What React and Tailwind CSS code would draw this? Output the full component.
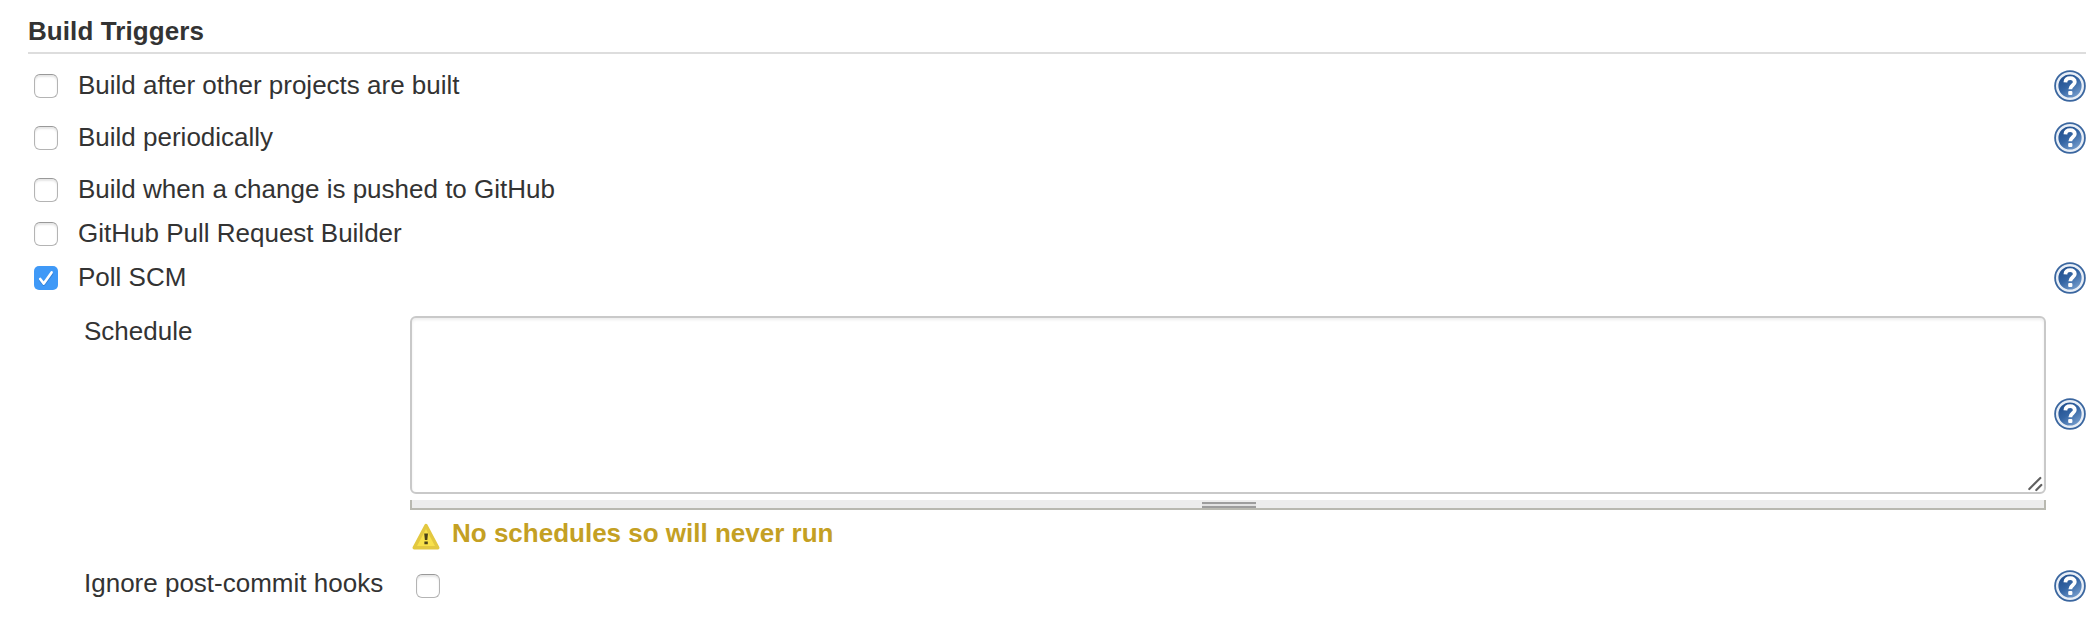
function Check({ checked = false }) {
  return checked ? (
    <span className="block h-6 w-6 rounded-[5px] bg-[#3f99f7]">
      <svg viewBox="0 0 24 24" className="block h-6 w-6" fill="none" strokeLinecap="round" strokeLinejoin="round">
        <path d="M6.2 14.2l3.6 4.4L18 7.6" stroke="#2f7fd6" strokeWidth="2.6" />
        <path d="M6.2 13l3.6 4.6L17.6 6.4" stroke="#fff" strokeWidth="2.6" />
      </svg>
    </span>
  ) : (
    <span className="block h-6 w-6 rounded-[6px] border-[1.5px] border-[#b4b4b4] border-t-[#999] bg-white shadow-[inset_0_2px_2px_#e6e6e6]" />
  );
}

function Help() {
  return (
    <svg viewBox="0 0 32 32" className="block h-8 w-8 shrink-0">
      <defs>
        <linearGradient id="help" x1="0.1" y1="0" x2="0.8" y2="1">
          <stop offset="0" stopColor="#1d4a88" />
          <stop offset="0.5" stopColor="#3465a4" />
          <stop offset="1" stopColor="#7fa5d2" />
        </linearGradient>
      </defs>
      <circle cx="16" cy="16" r="15.8" fill="#3a669f" />
      <circle cx="16" cy="16" r="12.8" fill="url(#help)" stroke="#e9eff7" strokeWidth="2.4" />
      <path d="M11.4 12.4C11.6 9.4 13.6 8.2 16.2 8.2c2.8 0 4.6 1.5 4.6 3.8 0 3.2-4.5 3.4-4.5 7.2" fill="none" stroke="#fff" strokeWidth="3.8" />
      <rect x="14.2" y="21" width="4.2" height="4" rx="1" fill="#fff" />
    </svg>
  );
}

function Row({ label, checked, help, className }) {
  return (
    <div className={`flex items-start pl-[6px] ${className}`}>
      <Check checked={checked} />
      <span className="-mt-[4px] ml-5 grow leading-[30px]">{label}</span>
      {help && <span className="-mt-1"><Help /></span>}
    </div>
  );
}

export default function App() {
  return (
    <main className="h-[626px] w-[2100px] overflow-hidden bg-white pl-7 pr-[14px] font-['Liberation_Sans',Arial,sans-serif] text-[26px] text-[#333]">
      <h2 className="h-[54px] border-b-2 border-[#ddd] pt-4 font-bold leading-[30px] tracking-[0.08px]">Build Triggers</h2>
      <section className="pt-5">
        <Row label="Build after other projects are built" help className="h-[52px]" />
        <Row label="Build periodically" help className="h-[52px]" />
        <Row label="Build when a change is pushed to GitHub" className="h-11" />
        <Row label="GitHub Pull Request Builder" className="h-11" />
        <Row label="Poll SCM" checked help className="h-[50px]" />
      </section>
      <section className="flex h-[194px]">
        <div className="w-[382px] shrink-0 pl-14 leading-[30px]">Schedule</div>
        <div className="w-[1636px] shrink-0">
          <div className="flex h-[178px] items-end justify-end rounded-[6px] border-2 border-[#c9c9c9] bg-white shadow-[inset_0_2px_3px_#eee]">
            <svg viewBox="0 0 16 16" className="h-4 w-4" stroke="#606060" strokeWidth="2.2" strokeLinecap="round">
              <path d="M1.3 13L12.3 2M8.3 14l5-5" />
            </svg>
          </div>
          <div className="mt-[6px] flex h-[10px] justify-center border-2 border-t-0 border-[#b9b9b1] bg-[#ededed] pl-[2px] pt-[2px]">
            <span className="h-[6px] w-[54px] border-y-2 border-[#9d9d9d] bg-[#e2e2e2]" />
          </div>
        </div>
        <div className="ml-2 pt-[82px]"><Help /></div>
      </section>
      <section className="flex h-[64px] pl-[383px] pt-[8px]">
        <svg viewBox="0 0 30 30" className="mt-[4px] h-[30px] w-[30px]">
          <path d="M15 3.5L26.8 25.8H3.2z" fill="#f8e14a" stroke="#e3c840" strokeWidth="3.4" strokeLinejoin="round" />
          <path d="M13.2 11.5h3.8l-.7 6.5h-2.4zM13.4 19.5h3.4v2.8h-3.4z" fill="#4a4219" />
        </svg>
        <strong className="ml-[11px] leading-[30px] text-[#c4a023]">No schedules so will never run</strong>
      </section>
      <section className="flex">
        <span className="-mt-[6px] w-[388px] pl-14 leading-[30px]">Ignore post-commit hooks</span>
        <span className="grow"><Check /></span>
        <span className="-mt-1"><Help /></span>
      </section>
    </main>
  );
}
